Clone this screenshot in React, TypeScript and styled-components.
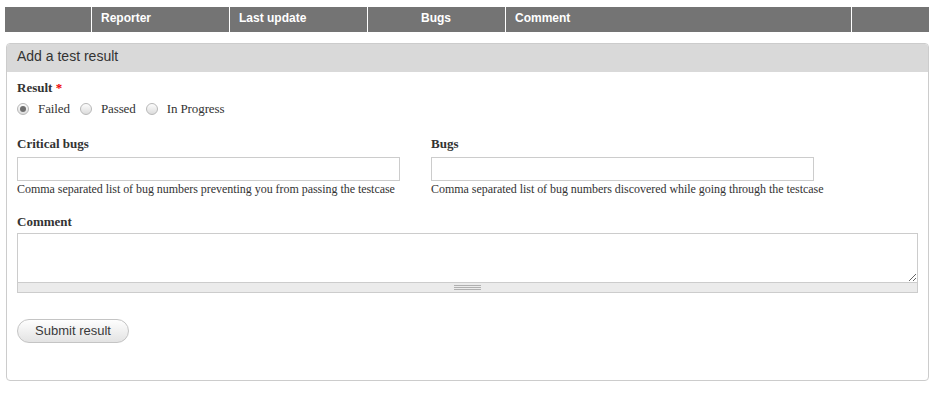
import React from "react";
import styled, { createGlobalStyle } from "styled-components";

const Global = createGlobalStyle`
  html, body { margin: 0; padding: 0; background: #fff; }
  body { font-family: "Liberation Serif", "Times New Roman", serif; color: #333; }
  * { box-sizing: border-box; }
`;

const Page = styled.div`
  padding: 7px 12px 0 5px;
`;

const HeaderRow = styled.div`
  display: grid;
  grid-template-columns: 86px 138px 138px 138px 346px 78px;
  background: #747474;
  height: 25px;
`;

const HeaderCell = styled.div<{ $first?: boolean; $center?: boolean }>`
  border-left: ${(p) => (p.$first ? "none" : "1px solid #fff")};
  font-family: "Liberation Sans", Arial, sans-serif;
  font-weight: bold;
  font-size: 12px;
  color: #fff;
  line-height: 22px;
  padding: 0 10px 3px 9px;
  text-align: ${(p) => (p.$center ? "center" : "left")};
  white-space: nowrap;
`;

const Fieldset = styled.section`
  margin: 11px 0 0 1px;
  border: 1px solid #ccc;
  border-radius: 4px;
  overflow: hidden;
`;

const Legend = styled.div`
  background: #d9d9d9;
  height: 28px;
  line-height: 25px;
  padding-left: 10px;
  font-family: "Liberation Sans", Arial, sans-serif;
  font-size: 14px;
  color: #333;
`;

const Body = styled.div`
  padding: 8px 10px 37px 10px;
`;

const Label = styled.div<{ $mb?: number; $mt?: number }>`
  font-size: 13px;
  font-weight: bold;
  line-height: 16px;
  color: #333;
  margin-top: ${(p) => p.$mt ?? 0}px;
  margin-bottom: ${(p) => p.$mb ?? 0}px;
`;

const Required = styled.span`
  color: #e00;
`;

const RadioRow = styled.div`
  display: flex;
  align-items: center;
  height: 20px;
  margin-top: 3px;
  gap: 10px;
`;

const RadioItem = styled.label`
  display: flex;
  align-items: center;
  gap: 9px;
  font-size: 13px;
  letter-spacing: -0.1px;
  color: #333;
`;

const RadioCircle = styled.span<{ $checked?: boolean }>`
  width: 12px;
  height: 12px;
  border-radius: 50%;
  border: 1px solid #b8b8b8;
  background: linear-gradient(#fdfdfd, #dcdcdc);
  display: flex;
  align-items: center;
  justify-content: center;
  &::after {
    content: "";
    display: ${(p) => (p.$checked ? "block" : "none")};
    width: 6px;
    height: 6px;
    border-radius: 50%;
    background: #6e6e6e;
  }
`;

const Columns = styled.div`
  display: grid;
  grid-template-columns: 414px 1fr;
  margin-top: 17px;
`;

const Field = styled.div``;

const TextInput = styled.input`
  display: block;
  width: 383px;
  height: 24px;
  border: 1px solid #ccc;
  margin: 5px 0 0 0;
  padding: 2px 4px;
  font-family: inherit;
  outline: none;
  background: #fff;
`;

const Description = styled.div`
  font-size: 12px;
  line-height: 16px;
  letter-spacing: -0.04px;
  color: #333;
  white-space: nowrap;
`;

const TextArea = styled.textarea`
  display: block;
  width: 100%;
  height: 50px;
  margin: 3px 0 0 0;
  border: 1px solid #ccc;
  padding: 4px;
  font-family: inherit;
  outline: none;
  resize: vertical;
`;

const Grippie = styled.div`
  height: 10px;
  background: #ebebeb;
  border: 1px solid #ccc;
  border-top: none;
  display: flex;
  justify-content: center;
  align-items: flex-start;
  padding-top: 2px;
`;

const GrippieLines = styled.span`
  width: 27px;
  height: 5px;
  border-top: 1px solid #b0b0b0;
  border-bottom: 1px solid #b0b0b0;
  position: relative;
  &::after {
    content: "";
    position: absolute;
    left: 0;
    right: 0;
    top: 1px;
    border-top: 1px solid #b0b0b0;
  }
`;

const SubmitButton = styled.button`
  display: block;
  margin-top: 26px;
  width: 112px;
  height: 24px;
  border: 1px solid #c4c4c4;
  border-radius: 12px;
  background: linear-gradient(#fefefe, #e3e3e3);
  font-family: "Liberation Sans", Arial, sans-serif;
  font-size: 13px;
  color: #3a3a3a;
  padding: 0 0 1px 0;
  cursor: pointer;
`;

const headers: { text: string; center?: boolean }[] = [
  { text: "" },
  { text: "Reporter" },
  { text: "Last update" },
  { text: "Bugs", center: true },
  { text: "Comment" },
  { text: "" },
];

const radios = [
  { text: "Failed", checked: true },
  { text: "Passed" },
  { text: "In Progress" },
];

export default function App() {
  return (
    <Page>
      <Global />
      <HeaderRow>
        {headers.map((h, i) => (
          <HeaderCell key={i} $first={i === 0} $center={h.center}>
            {h.text}
          </HeaderCell>
        ))}
      </HeaderRow>
      <Fieldset>
        <Legend>Add a test result</Legend>
        <Body>
          <Label>
            Result <Required>*</Required>
          </Label>
          <RadioRow>
            {radios.map((r) => (
              <RadioItem key={r.text}>
                <RadioCircle $checked={r.checked} />
                {r.text}
              </RadioItem>
            ))}
          </RadioRow>
          <Columns>
            <Field>
              <Label>Critical bugs</Label>
              <TextInput type="text" />
              <Description>
                Comma separated list of bug numbers preventing you from passing the testcase
              </Description>
            </Field>
            <Field>
              <Label>Bugs</Label>
              <TextInput type="text" />
              <Description>
                Comma separated list of bug numbers discovered while going through the testcase
              </Description>
            </Field>
          </Columns>
          <Label $mt={17}>Comment</Label>
          <TextArea />
          <Grippie>
            <GrippieLines />
          </Grippie>
          <SubmitButton type="button">Submit result</SubmitButton>
        </Body>
      </Fieldset>
    </Page>
  );
}
